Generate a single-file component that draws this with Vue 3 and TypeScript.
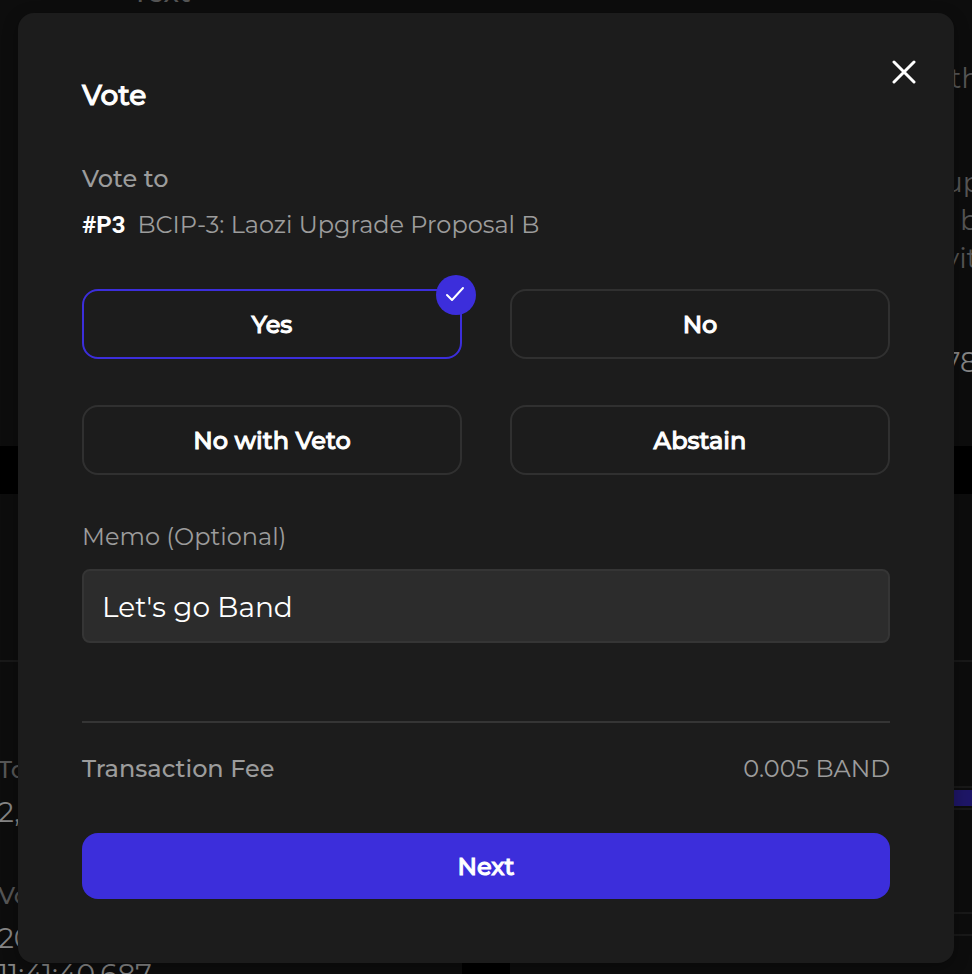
<script setup lang="ts">
import { ref } from 'vue'

type VoteOption = { value: string; label: string }

const options: VoteOption[] = [
  { value: 'yes', label: 'Yes' },
  { value: 'no', label: 'No' },
  { value: 'veto', label: 'No with Veto' },
  { value: 'abstain', label: 'Abstain' },
]

const selected = ref<string>('yes')
const memo = ref<string>("Let's go Band")
const open = ref<boolean>(true)
</script>

<template>
  <div class="app">
    <!-- Proposal page, dimmed behind the dialog -->
    <div class="page" aria-hidden="true">
      <div class="card summary">
        <div class="kind">Text</div>
        <div class="excerpt">
          <p class="lead">th</p>
          <p>up</p>
          <p class="deep">b</p>
          <p>vit</p>
          <p class="bright amount">78</p>
        </div>
      </div>
      <div class="columns">
        <div class="card">
          <div class="card-head"></div>
          <dl class="facts">
            <dt>To</dt>
            <dd>2,</dd>
            <dt>Vo</dt>
            <dd>20<br />11:41:40.687</dd>
          </dl>
        </div>
        <div class="card">
          <div class="card-head"></div>
          <div class="bars">
            <div class="bar"><div class="fill"></div></div>
            <div class="bar"></div>
          </div>
        </div>
      </div>
    </div>

    <div v-if="open" class="overlay">
      <form class="modal" role="dialog" aria-labelledby="vote-title" @submit.prevent>
        <button class="close" type="button" aria-label="Close" @click="open = false">
          <svg viewBox="0 0 24 24" width="24" height="24" fill="none" stroke="currentColor" stroke-width="3" stroke-linecap="round">
            <path d="M2 2L22 22M22 2L2 22" />
          </svg>
        </button>

        <h1 id="vote-title" class="title">Vote</h1>

        <h2 class="label">Vote to</h2>
        <p class="proposal">
          <a class="proposal-id" href="#P3">#P3</a>
          <span>BCIP-3: Laozi Upgrade Proposal B</span>
        </p>

        <div class="options" role="radiogroup" aria-label="Vote to">
          <label
            v-for="option in options"
            :key="option.value"
            class="option"
            :class="{ active: selected === option.value }"
          >
            <input v-model="selected" class="radio" type="radio" name="vote" :value="option.value" />
            {{ option.label }}
            <span v-if="selected === option.value" class="badge">
              <svg viewBox="0 0 20 16" width="20" height="16" fill="none" stroke="currentColor" stroke-width="2" stroke-linecap="round" stroke-linejoin="round">
                <path d="M2 9L7 14L18 2" />
              </svg>
            </span>
          </label>
        </div>

        <label class="memo-label" for="memo">Memo (Optional)</label>
        <input id="memo" v-model="memo" class="memo" type="text" />

        <div class="fee">
          <span class="fee-name">Transaction Fee</span>
          <span>0.005 BAND</span>
        </div>

        <button class="next" type="submit">Next</button>
      </form>
    </div>
  </div>
</template>

<style>
body {
  background: #000;
}
</style>

<style scoped>
.app {
  position: relative;
  min-height: 100vh;
  overflow: hidden;
  font-family: Montserrat, Inter, 'Open Sans', sans-serif;
  font-size: 24px;
  line-height: 32px;
  color: #9c9c9c;
}

* {
  box-sizing: border-box;
}

h1,
h2,
p,
dl,
dd {
  margin: 0;
}

/* The page sits scrolled behind the dialog and is cut off by the window */
.page {
  position: absolute;
  inset: 0;
  overflow: hidden;
  display: flex;
  flex-direction: column;
  gap: 48px;
  color: #555;
}

.card {
  background: #0d0d0d;
}

.summary {
  flex: none;
  height: 446px;
  display: flex;
  justify-content: space-between;
}

.kind {
  margin-top: -24px;
  padding-left: 132px;
  font-size: 28px;
  font-weight: 500;
}

.excerpt {
  width: 28px;
  padding-top: 59px;
  font-size: 28px;
  line-height: 38px;
  white-space: nowrap;
}

.lead {
  padding-left: 6px;
  margin-bottom: 66px;
}

.deep {
  padding-left: 16px;
}

.bright,
.facts dd {
  color: #868686;
}

.amount {
  margin-top: 66px;
}

.columns {
  flex: 1;
  display: grid;
  grid-template-columns: 1fr 1fr;
  gap: 48px;
}

.card-head {
  height: 168px;
  border-bottom: 2px solid #191919;
}

.facts {
  margin-left: -2px;
  padding-top: 92px;
}

.facts dt {
  font-weight: 500;
  margin-bottom: 8px;
}

.facts dd {
  font-size: 28px;
  line-height: 36px;
  margin-bottom: 50px;
}

.bars {
  display: flex;
  flex-direction: column;
  gap: 102px;
  padding-top: 124px;
}

.bar {
  height: 24px;
  padding: 2px 0;
  border: solid #191919;
  border-width: 2px 0;
}

.fill {
  height: 100%;
  background: #1e1667;
}

.overlay {
  position: relative;
  min-height: 100vh;
  padding: 13px 18px 11px;
}

.modal {
  position: relative;
  display: flex;
  flex-direction: column;
  padding: 64px;
  background: #1c1c1c;
  border-radius: 16px;
  box-shadow: 0 4px 16px rgba(0, 0, 0, 0.3);
}

.close {
  position: absolute;
  top: 42px;
  right: 33px;
  display: flex;
  padding: 5px;
  border: 0;
  background: none;
  color: #fff;
  cursor: pointer;
}

/* Medium letterforms thickened with a thin stroke of the text colour */
.title,
.option,
.next {
  font-weight: 500;
  color: #fff;
  -webkit-text-stroke: 1px #fff;
}

.title {
  font-size: 28px;
  line-height: 36px;
}

.label {
  margin-top: 50px;
  font-size: 24px;
  font-weight: 500;
}

.proposal {
  display: flex;
  gap: 12px;
  margin-top: 14px;
}

.proposal-id {
  font-family: Roboto, sans-serif;
  font-weight: 700;
  color: #fff;
  text-decoration: none;
}

.options {
  display: grid;
  grid-template-columns: 1fr 1fr;
  gap: 46px 48px;
  margin-top: 48px;
}

.option {
  position: relative;
  display: flex;
  align-items: center;
  justify-content: center;
  height: 70px;
  padding-top: 2px;
  border: 2px solid #303030;
  border-radius: 16px;
  cursor: pointer;
}

.option.active {
  border-color: #3c2edb;
}

.radio {
  position: absolute;
  inset: 0;
  margin: 0;
  opacity: 0;
}

.badge {
  position: absolute;
  top: -16px;
  right: -16px;
  display: flex;
  align-items: center;
  justify-content: center;
  width: 40px;
  height: 40px;
  padding: 0 2px 2px 0;
  border-radius: 50%;
  background: #3c2edb;
}

.memo-label {
  margin-top: 46px;
}

.memo {
  width: 100%;
  height: 74px;
  margin-top: 16px;
  padding: 2px 18px 0;
  border: 2px solid #353535;
  border-radius: 8px;
  background: #2c2c2c;
  font: inherit;
  font-size: 28px;
  color: #fff;
  outline: none;
}

.fee {
  display: flex;
  justify-content: space-between;
  margin-top: 78px;
  padding-top: 30px;
  border-top: 2px solid #353535;
}

.fee-name {
  font-weight: 500;
}

.next {
  height: 66px;
  margin-top: 48px;
  padding: 0;
  border: 0;
  border-radius: 16px;
  background: #3c2edb;
  font-family: inherit;
  font-size: 24px;
  cursor: pointer;
}
</style>
